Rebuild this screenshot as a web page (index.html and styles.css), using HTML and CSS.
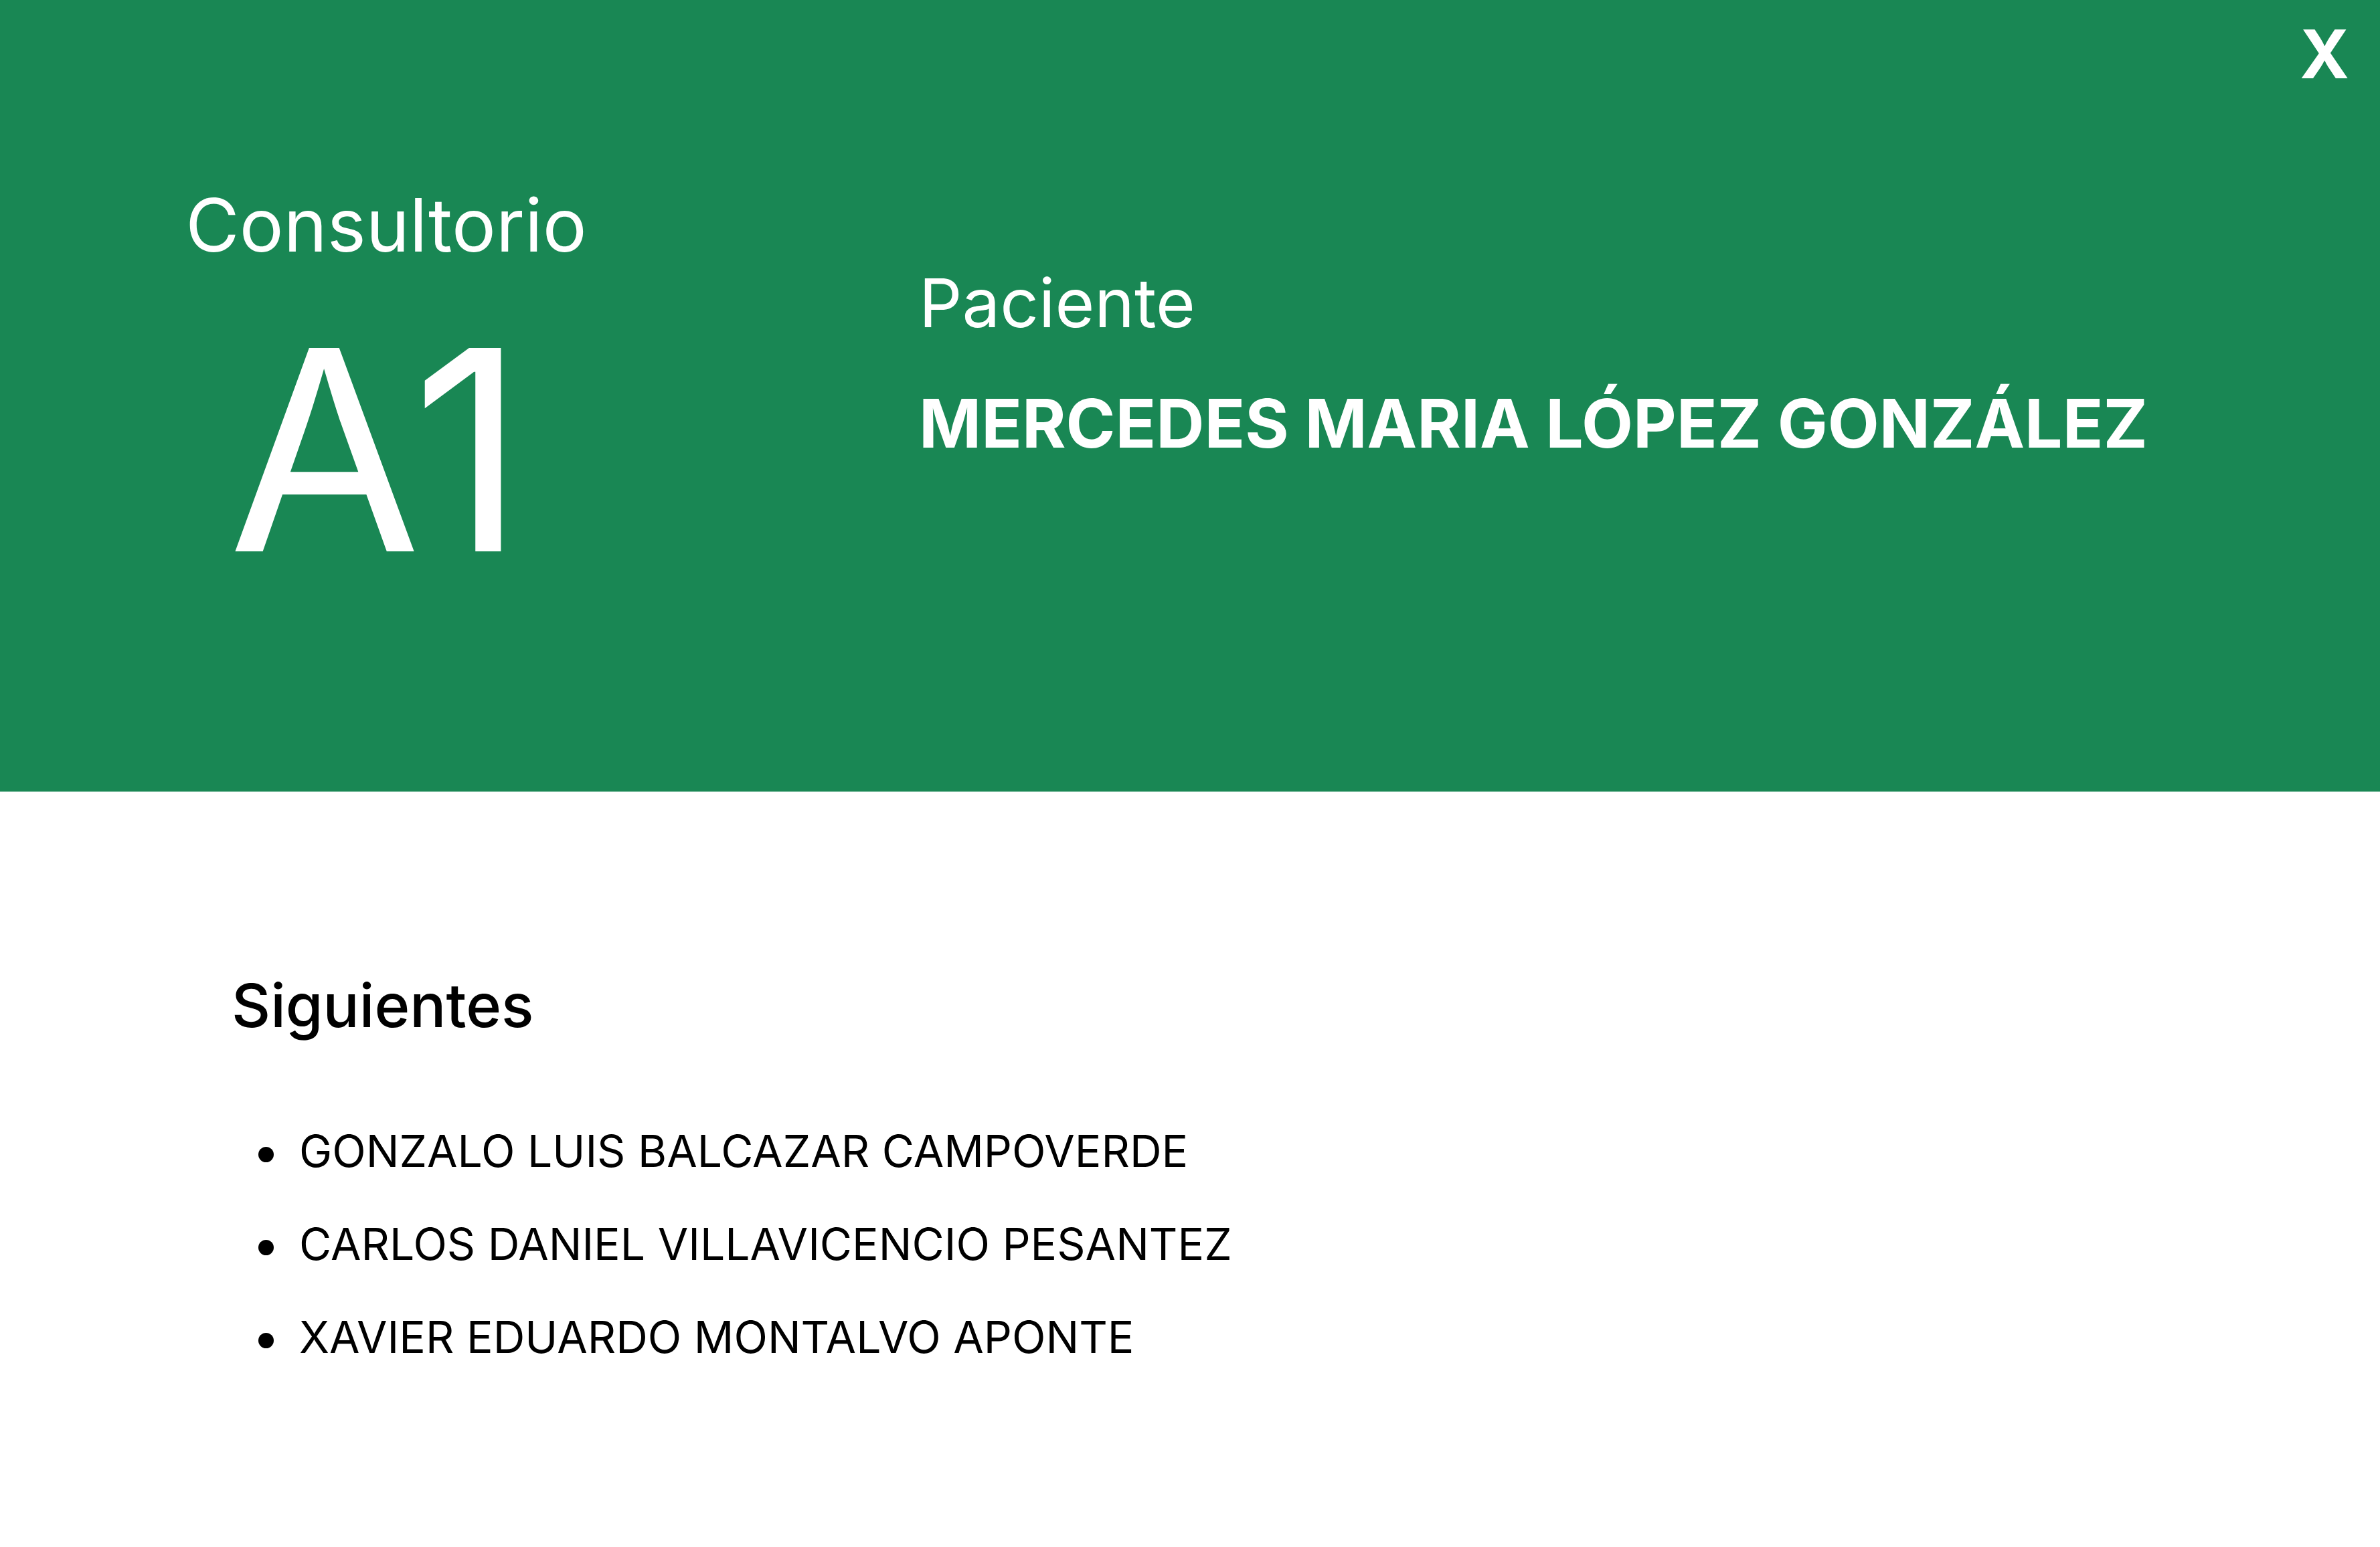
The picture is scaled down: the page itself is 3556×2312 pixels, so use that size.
FILE: index.html
```html
<!DOCTYPE html>
<html lang="es">
<head>
<meta charset="utf-8">
<title>Turno</title>
<link rel="stylesheet" href="styles.css">
</head>
<body>
<header class="banner">
  <button class="close" type="button">X</button>
  <div class="room">
    <div class="room-label">Consultorio</div>
    <div class="room-code">A1</div>
  </div>
  <div class="patient">
    <div class="patient-label">Paciente</div>
    <div class="patient-name">MERCEDES MARIA LÓPEZ GONZÁLEZ</div>
  </div>
</header>
<main class="queue">
  <h2 class="queue-title">Siguientes</h2>
  <ul class="queue-list">
    <li>GONZALO LUIS BALCAZAR CAMPOVERDE</li>
    <li>CARLOS DANIEL VILLAVICENCIO PESANTEZ</li>
    <li>XAVIER EDUARDO MONTALVO APONTE</li>
  </ul>
</main>
</body>
</html>
```

FILE: styles.css
```css
html, body {
  margin: 0;
  padding: 0;
  background: #fff;
}
body {
  font-family: Inter, "Noto Sans", "Liberation Sans", sans-serif;
  color: #000;
  width: 3556px;
  height: 2312px;
  overflow: hidden;
}
.banner {
  position: relative;
  height: 1183px;
  background: #198754;
  color: #fff;
  display: flex;
  align-items: flex-start;
  box-sizing: border-box;
}
.close {
  position: absolute;
  top: 31px;
  right: 46px;
  background: none;
  border: 0;
  padding: 0;
  margin: 0;
  color: #fff;
  font-family: inherit;
  font-weight: 700;
  font-size: 100px;
  line-height: 1;
  cursor: pointer;
}
.room {
  width: 1154px;
  text-align: center;
  padding-top: 281px;
}
.room-label {
  font-size: 110px;
  line-height: 1;
}
.room-code {
  font-size: 418px;
  line-height: 1;
  margin-top: 72px;
  padding-right: 28px;
}
.patient {
  padding-top: 402px;
  margin-left: 219px;
}
.patient-label {
  font-size: 101px;
  line-height: 1;
}
.patient-name {
  font-size: 100px;
  font-weight: 700;
  line-height: 1;
  margin-top: 80px;
}
.queue {
  padding: 275px 0 0 346px;
}
.queue-title {
  margin: 0;
  font-size: 90px;
  font-weight: 500;
  line-height: 1;
}
.queue-list {
  list-style: none;
  margin: 103px 0 0;
  padding-left: 40px;
}
.queue-list li {
  font-size: 66px;
  line-height: 139px;
}
.queue-list li::before {
  content: "";
  display: inline-block;
  width: 23px;
  height: 23px;
  border-radius: 50%;
  background: #000;
  vertical-align: middle;
  margin-right: 38px;
}
```
